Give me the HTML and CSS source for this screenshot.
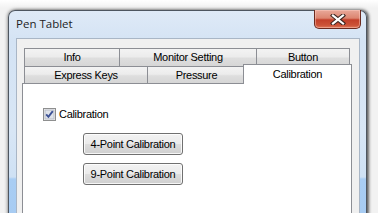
FILE: index.html
```html
<!DOCTYPE html>
<html>
<head>
<meta charset="utf-8">
<link rel="stylesheet" href="styles.css">
</head>
<body>
<div class="window">
  <div class="titlebar">
    <span class="title">Pen Tablet</span>
    <div class="close">
      <svg width="16" height="11" viewBox="0 0 16 11">
        <path d="M3 1.5 L13 9.5 M13 1.5 L3 9.5" stroke="#3b2520" stroke-width="4.2" stroke-linecap="square" fill="none"/>
        <path d="M3 1.5 L13 9.5 M13 1.5 L3 9.5" stroke="#ffffff" stroke-width="2.2" stroke-linecap="square" fill="none"/>
      </svg>
    </div>
  </div>
  <div class="client">
    <div class="tabs">
      <div class="tabrow row1">
        <div class="tab t-info">Info</div>
        <div class="tab t-monitor">Monitor Setting</div>
        <div class="tab t-button">Button</div>
      </div>
      <div class="tabrow row2">
        <div class="tab t-express">Express Keys</div>
        <div class="tab t-pressure">Pressure</div>
        <div class="tab t-calib selected">Calibration</div>
      </div>
    </div>
    <div class="panel">
      <div class="check">
        <span class="box">
          <svg width="13" height="13" viewBox="0 0 13 13">
            <rect x="0.5" y="0.5" width="12" height="12" fill="#f4f4f4" stroke="#8e8f8f"/>
            <rect x="2" y="2" width="9" height="9" fill="#dfe3ea" stroke="#b7bcc6" stroke-width="1"/>
            <path d="M3.2 6.4 L5.4 8.8 L9.8 3.2" stroke="#3d5296" stroke-width="1.9" fill="none"/>
          </svg>
        </span>
        <span class="label">Calibration</span>
      </div>
      <div class="btns">
        <div class="btn">4-Point Calibration</div>
        <div class="btn">9-Point Calibration</div>
      </div>
    </div>
  </div>
</div>
</body>
</html>
```

FILE: styles.css
```css
html, body {
  margin: 0;
  padding: 0;
  width: 378px;
  height: 213px;
  overflow: hidden;
  background: linear-gradient(to bottom, #ffffff 0px, #f2f2f2 8px);
}
body {
  padding-top: 10px;
  padding-left: 8px;
  box-sizing: border-box;
}
.window {
  width: 359px;
  height: 230px;
  box-sizing: border-box;
  border: 1px solid #4e5660;
  border-bottom: none;
  border-radius: 7px 7px 0 0;
  background: linear-gradient(to bottom, #dfeaf7 0px, #d4e3f4 30px, #d8e6f5 120px, #cfe1f4 166px, #a9cdf3 168px, #a6cbf2 230px);
  box-shadow: 2px 0 3px rgba(0,0,0,0.55), -1px 0 3px rgba(0,0,0,0.25), 0 -1px 4px rgba(0,0,0,0.15);
  display: flex;
  flex-direction: column;
}
.titlebar {
  height: 27px;
  display: flex;
  align-items: flex-start;
  flex-shrink: 0;
}
.title {
  font-family: "Open Sans", "Noto Sans", sans-serif;
  font-size: 11.5px;
  color: #1e1e1e;
  padding-left: 7px;
  padding-top: 5px;
  line-height: 16px;
}
.close {
  margin-left: auto;
  margin-right: 5px;
  margin-top: -1px;
  width: 47px;
  height: 19px;
  box-sizing: border-box;
  border: 1px solid #6b2a1f;
  border-top: none;
  border-radius: 0 0 5px 5px;
  background: linear-gradient(to bottom, #e9a99a 0%, #dc8570 45%, #c3402a 55%, #cc5338 85%, #e07a5c 100%);
  box-shadow: inset 0 0 0 1px rgba(255,210,200,0.45);
  display: flex;
  align-items: center;
  justify-content: center;
}
.close svg { display: block; }
.client {
  margin: 0 6px 0 7px;
  flex: 1;
  border: 1px solid #a9b6c6;
  border-bottom: none;
  background: #f0f0f0;
  padding-top: 9px;
}
.tabs {
  margin-left: 5px;
  font-family: "Liberation Sans", Arial, sans-serif;
  font-size: 11px;
  letter-spacing: -0.3px;
  color: #000;
}
.tabrow {
  display: flex;
  padding-left: 2px;
}
.tab {
  box-sizing: border-box;
  border: 1px solid #8c8e94;
  border-bottom: none;
  background: linear-gradient(to bottom, #f3f3f3 0%, #ececec 45%, #dedede 55%, #d6d6d6 100%);
  text-align: center;
  white-space: nowrap;
}
.row1 .tab {
  height: 18px;
  line-height: 17px;
}
.row2 .tab {
  height: 17px;
  line-height: 16px;
}
.t-info { width: 96px; }
.t-monitor { width: 138px; margin-left: -1px; }
.t-button { width: 94px; margin-left: -1px; }
.t-express { width: 124px; }
.t-pressure { width: 99px; margin-left: -1px; }
.row2 .selected {
  width: 109px;
  margin-left: -3px;
  height: 20px;
  margin-top: -2px;
  margin-bottom: -1px;
  line-height: 18px;
  background: #ffffff;
  position: relative;
  z-index: 2;
}
.panel {
  margin-left: 5px;
  width: 330px;
  height: 140px;
  box-sizing: border-box;
  border: 1px solid #8c8e94;
  background: #ffffff;
  padding: 24px 0 0 20px;
  font-family: "Liberation Sans", Arial, sans-serif;
  font-size: 11px;
  letter-spacing: -0.3px;
  color: #000;
}
.check {
  display: flex;
  align-items: center;
  height: 13px;
}
.box {
  width: 13px;
  height: 13px;
  display: block;
}
.box svg { display: block; }
.label {
  margin-left: 3px;
  line-height: 13px;
}
.btns {
  display: flex;
  flex-direction: column;
  gap: 8px;
  margin-top: 12px;
  margin-left: 40px;
}
.btn {
  width: 100px;
  height: 22px;
  box-sizing: border-box;
  border: 1px solid #707070;
  border-radius: 3px;
  background: linear-gradient(to bottom, #f2f2f2 0%, #ebebeb 48%, #dddddd 52%, #cfcfcf 100%);
  box-shadow: inset 0 0 0 1px rgba(255,255,255,0.8);
  text-align: center;
  line-height: 20px;
  white-space: nowrap;
}
```
